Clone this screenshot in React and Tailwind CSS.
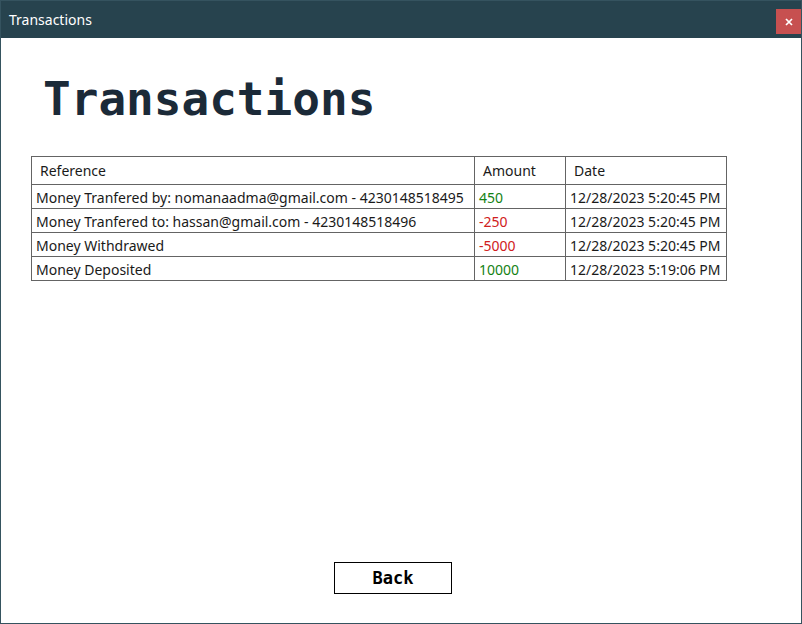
const transactions = [
  { reference: 'Money Tranfered by: nomanaadma@gmail.com - 4230148518495', amount: 450, date: '12/28/2023 5:20:45 PM' },
  { reference: 'Money Tranfered to: hassan@gmail.com - 4230148518496', amount: -250, date: '12/28/2023 5:20:45 PM' },
  { reference: 'Money Withdrawed', amount: -5000, date: '12/28/2023 5:20:45 PM' },
  { reference: 'Money Deposited', amount: 10000, date: '12/28/2023 5:19:06 PM' },
];

function TitleBar() {
  return (
    <header className="flex h-[37px] items-center justify-between bg-[#27434e] pl-2 text-white">
      <span className="text-sm leading-5">Transactions</span>
      <button type="button" aria-label="Close" className="mt-1 flex h-[25px] w-[25px] items-center justify-center bg-[#c75050]">
        <svg width="8" height="8" viewBox="0 0 8 8" fill="none" stroke="currentColor" strokeWidth="1.7">
          <path d="M1 1l6 6M7 1L1 7" />
        </svg>
      </button>
    </header>
  );
}

function TransactionsTable() {
  return (
    <table className="w-[696px] table-fixed border-collapse border border-[#646464] text-left text-sm whitespace-nowrap text-[#1a1a1a]">
      <colgroup>
        <col className="w-[443px]" />
        <col className="w-[91px]" />
        <col />
      </colgroup>
      <thead>
        <tr className="h-7">
          {['Reference', 'Amount', 'Date'].map((name) => (
            <th key={name} scope="col" className="border border-[#646464] px-2 py-0 font-normal">{name}</th>
          ))}
        </tr>
      </thead>
      <tbody>
        {transactions.map((t) => (
          <tr key={t.reference} className="h-6">
            <td className="border border-[#646464] px-1 pt-0.5 pb-0">{t.reference}</td>
            <td className={`border border-[#646464] px-1 pt-0.5 pb-0 ${t.amount < 0 ? 'text-[#d02020]' : 'text-[#148214]'}`}>{t.amount}</td>
            <td className="border border-[#646464] px-1 pt-0.5 pb-0">{t.date}</td>
          </tr>
        ))}
      </tbody>
    </table>
  );
}

export default function App() {
  return (
    <div className="flex min-h-screen flex-col border border-[#35535f] bg-white font-['Noto_Sans',sans-serif]">
      <TitleBar />
      <main className="flex grow flex-col px-[30px] pb-[29px]">
        <h1 className="mt-[30px] mb-[26px] px-3 font-['DejaVu_Sans_Mono',monospace] text-[46px] leading-[62px] font-bold text-[#1b2a38]">Transactions</h1>
        <TransactionsTable />
        <div className="mt-auto flex justify-center pr-4">
          <button type="button" className="h-8 w-[118px] border border-black font-['DejaVu_Sans_Mono',monospace] text-[17px] leading-6 font-bold text-black">
            Back
          </button>
        </div>
      </main>
    </div>
  );
}
